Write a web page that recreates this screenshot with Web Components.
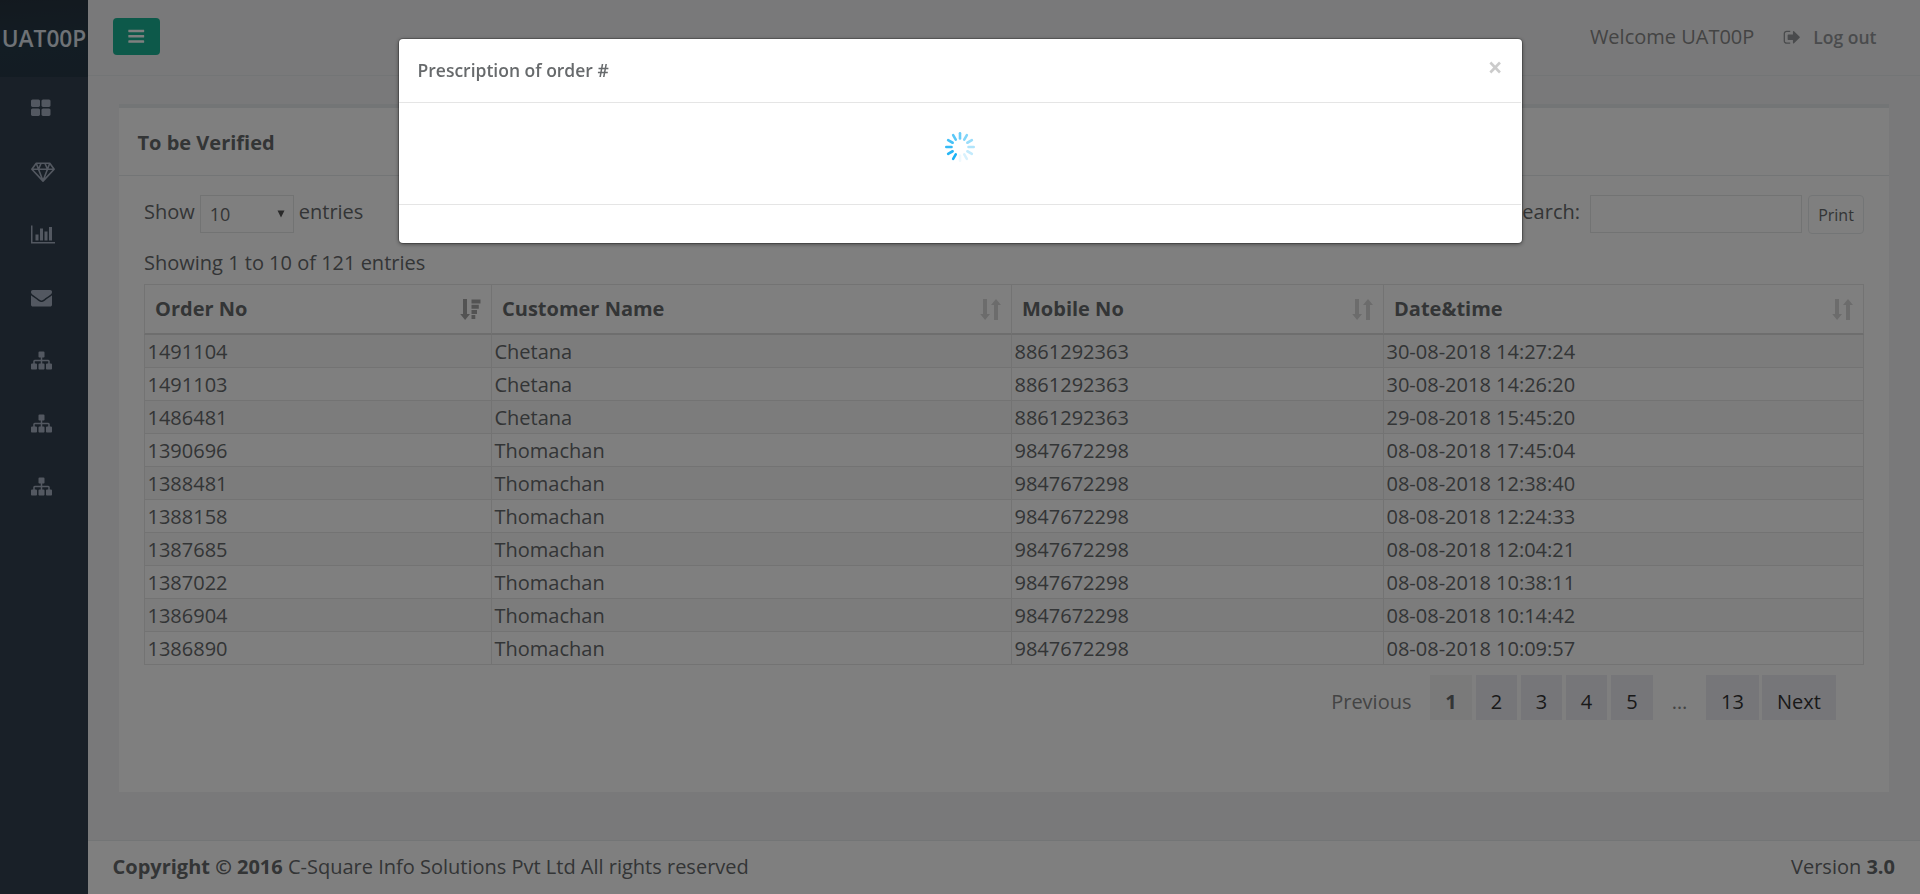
<!DOCTYPE html>
<html lang="en">
<head>
<meta charset="utf-8">
<title>To be Verified</title>
<style>
html,body{margin:0;height:100%;overflow:hidden}
body{font:20px/28px "Open Sans",sans-serif;color:#676a6c;background:#f3f3f4}
</style>
</head>
<body>
<app-shell>
  <side-nav slot="side" brand="UAT00P"></side-nav>
  <top-bar slot="top" user="UAT00P"></top-bar>
  <data-panel heading="To be Verified">
    <list-toolbar></list-toolbar>
    <orders-table></orders-table>
    <page-links></page-links>
  </data-panel>
  <page-footer slot="foot"></page-footer>
</app-shell>
<modal-dialog heading="Prescription of order #"><loading-spinner></loading-spinner></modal-dialog>

<script>
const ICONS = {
  bars:[1792,'<path d="M1664 1344v128q0 26-19 45t-45 19h-1408q-26 0-45-19t-19-45v-128q0-26 19-45t45-19h1408q26 0 45 19t19 45zm0-512v128q0 26-19 45t-45 19h-1408q-26 0-45-19t-19-45v-128q0-26 19-45t45-19h1408q26 0 45 19t19 45zm0-512v128q0 26-19 45t-45 19h-1408q-26 0-45-19t-19-45v-128q0-26 19-45t45-19h1408q26 0 45 19t19 45z"/>'],
  grid:[1792,'<path transform="translate(-64 0)" d="M832 1024v384q0 52-38 90t-90 38h-512q-52 0-90-38t-38-90v-384q0-52 38-90t90-38h512q52 0 90 38t38 90zm0-768v384q0 52-38 90t-90 38h-512q-52 0-90-38t-38-90v-384q0-52 38-90t90-38h512q52 0 90 38t38 90zm896 768v384q0 52-38 90t-90 38h-512q-52 0-90-38t-38-90v-384q0-52 38-90t90-38h512q52 0 90 38t38 90zm0-768v384q0 52-38 90t-90 38h-512q-52 0-90-38t-38-90v-384q0-52 38-90t90-38h512q52 0 90 38t38 90z"/>'],
  diamond:[2048,'<path fill="none" stroke="currentColor" stroke-width="135" stroke-linejoin="round" d="M448 192H1600L1975 704L1024 1720L73 704ZM73 704H1975M640 704L1024 1690L1408 704M448 192L640 704L860 192M1188 192L1408 704L1600 192"/>'],
  chart:[2048,'<path d="M640 896v512h-256v-512h256zm384-512v1024h-256v-1024h256zm1024 1152v128h-2048v-1536h128v1408h1920zm-640-896v768h-256v-768h256zm384-384v1152h-256v-1152h256z"/>'],
  mail:[1792,'<path d="M1792 710v794q0 66-47 113t-113 47h-1472q-66 0-113-47t-47-113v-794q44 49 101 87 362 246 497 345 57 42 92.5 65.5t94.5 48 110 24.5h2q51 0 110-24.5t94.5-48 92.5-65.5q170-123 498-345 57-39 100-87zm0-294q0 79-49 151t-122 123q-376 261-468 325-10 7-42.5 31t-54 38.5-52 32.5-57.5 27-50 9h-2q-23 0-50-9t-57.5-27-52-32.5-54-38.5-42.5-31q-91-64-262-182.5t-205-142.5q-62-42-117-115.5t-55-136.5q0-78 41.5-130t118.5-52h1472q65 0 112.5 47t47.5 113z"/>'],
  tree:[1792,'<path d="M1792 1248v320q0 40-28 68t-68 28h-320q-40 0-68-28t-28-68v-320q0-40 28-68t68-28h96v-192h-512v192h96q40 0 68 28t28 68v320q0 40-28 68t-68 28h-320q-40 0-68-28t-28-68v-320q0-40 28-68t68-28h96v-192h-512v192h96q40 0 68 28t28 68v320q0 40-28 68t-68 28h-320q-40 0-68-28t-28-68v-320q0-40 28-68t68-28h96v-192q0-52 38-90t90-38h512v-192h-96q-40 0-68-28t-28-68v-320q0-40 28-68t68-28h320q40 0 68 28t28 68v320q0 40-28 68t-68 28h-96v192h512q52 0 90 38t38 90v192h96q40 0 68 28t28 68z"/>'],
  out:[1792,'<path d="M704 1440q0 4 1 20t.5 26.5-3 23.5-10 19.5-20.5 6.5h-320q-119 0-203.5-84.5t-84.5-203.5v-704q0-119 84.5-203.5t203.5-84.5h320q13 0 22.5 9.5t9.5 22.5q0 4 1 20t.5 26.5-3 23.5-10 19.5-20.5 6.5h-320q-66 0-113 47t-47 113v704q0 66 47 113t113 47h312l11.5 1 11.5 3 8 5.5 7 9 2 13.5zm928-544q0 26-19 45l-544 544q-19 19-45 19t-45-19-19-45v-288h-448q-26 0-45-19t-19-45v-384q0-26 19-45t45-19h448v-288q0-26 19-45t45-19 45 19l544 544q19 19 19 45z"/>']
};
const define = (name, css, html) => customElements.define(name, class extends HTMLElement {
  constructor(){
    super();
    const t = document.createElement('template');
    t.innerHTML = '<style>' + css + '</style>' + (typeof html === 'function' ? html(this) : html);
    this.attachShadow({mode:'open'}).append(t.content.cloneNode(true));
  }
});

define('ui-icon', ':host{display:block}svg{display:block;fill:currentColor}', el => {
  const [w, body] = ICONS[el.getAttribute('name')], s = +el.getAttribute('size');
  return `<svg viewBox="0 0 ${w} 1792" width="${s * w / 1792}" height="${s}">${body}</svg>`;
});

define('app-shell', `
:host{display:grid;grid-template-columns:88px 1fr;height:894px}
.main{display:flex;flex-direction:column;min-width:0}
.content{flex:1;padding:28px 31px 0}`,
`<slot name="side"></slot><div class="main"><slot name="top"></slot><div class="content"><slot></slot></div><slot name="foot"></slot></div>`);

define('side-nav', `
:host{display:block;background:#334150;color:#a7b1c2}
.brand{box-sizing:border-box;height:77px;display:flex;align-items:center;justify-content:center;color:#dfe4ed;font-weight:600;font-size:22.7px;background:linear-gradient(175deg,#26333f,#263a48 60%,#263847);white-space:nowrap}
.item{height:63px;display:flex;align-items:center;padding:0 0 0 31px;box-sizing:border-box}`,
el => `<div class="brand">${el.getAttribute('brand')}</div>` +
  ['grid','diamond','chart','mail','tree','tree','tree'].map(n => `<div class="item"><ui-icon name="${n}" size="21"></ui-icon></div>`).join(''));

define('top-bar', `
:host{box-sizing:border-box;height:76px;border-bottom:1px solid #e7eaec;display:flex;align-items:center;padding:0 43.5px 3px 25px}
.menu{width:47px;height:37px;border-radius:4px;background:#1ab394;color:#fff;display:flex;align-items:center;justify-content:center}
.user{margin-left:auto;color:#888;padding-top:2px}
.out{display:flex;align-items:center;font-weight:600;font-size:17.5px;color:#94979a;margin-left:29px;gap:11.500px}
.out span{padding-top:2px}.out ui-icon{padding-top:2px}`,
el => `<div class="menu"><ui-icon name="bars" size="18.5"></ui-icon></div><span class="user">Welcome ${el.getAttribute('user')}</span><div class="out"><ui-icon name="out" size="18.5"></ui-icon><span>Log out</span></div>`);

define('data-panel', `
:host{display:block;box-sizing:border-box;height:688px;border-top:4px solid #e7eaec;background:#fff}
h5{margin:0;box-sizing:border-box;height:68px;border-bottom:1px solid #e7eaec;padding:20px 18.5px 0;font-size:20px;line-height:30px;font-weight:700}
.body{padding:19px 25px 0}`,
el => `<h5>${el.getAttribute('heading')}</h5><div class="body"><slot></slot></div>`);

define('list-toolbar', `
:host{display:block;height:89px}
.row{display:flex;height:39px}
.txt{line-height:34px}
.sel,.inp{box-sizing:border-box;height:38px;border:1px solid #e5e6e7}
.sel{width:94px;margin:0 5px 0 5px;display:flex;align-items:center;justify-content:space-between;padding:0 8px 0 9px;font-size:18px}
.inp{width:212px;margin-left:10px}
.search{margin-left:auto}
.print{box-sizing:border-box;width:56px;height:39px;margin-left:6px;border:1px solid #e7eaec;border-radius:4px;font-size:16px;line-height:38px;text-align:center}
.info{margin-top:15px;line-height:28px}`,
`<div class="row"><span class="txt">Show</span><div class="sel"><span>10</span><svg width="8" height="8"><path d="M0.5 .5h7L4 7.5z" fill="#555"/></svg></div><span class="txt">entries</span><span class="txt search">Search:</span><div class="inp"></div><div class="print">Print</div></div><div class="info">Showing 1 to 10 of 121 entries</div>`);

const arrows = `<svg class="s" width="21" height="21"><path d="M3 0h4v15h3L5.100 21 .2 15h2.800zM14 21h4V6h3L16 0 11 6h3z"/></svg>`;
const sorted = `<svg class="s on" width="21" height="21"><path d="M3 0h4v15h3L5.100 21 .2 15h2.800zM11.500 .5h9v4h-9zM11.500 5.700h7.300v4h-7.300zM11.500 10.900h5.500v4h-5.500zM11.500 16h3.800v4h-3.800z"/></svg>`;
const rows = [['1491104','Chetana','8861292363','30-08-2018 14:27:24'],['1491103','Chetana','8861292363','30-08-2018 14:26:20'],['1486481','Chetana','8861292363','29-08-2018 15:45:20'],['1390696','Thomachan','9847672298','08-08-2018 17:45:04'],['1388481','Thomachan','9847672298','08-08-2018 12:38:40'],['1388158','Thomachan','9847672298','08-08-2018 12:24:33'],['1387685','Thomachan','9847672298','08-08-2018 12:04:21'],['1387022','Thomachan','9847672298','08-08-2018 10:38:11'],['1386904','Thomachan','9847672298','08-08-2018 10:14:42'],['1386890','Thomachan','9847672298','08-08-2018 10:09:57']];
define('orders-table', `
:host{display:block}
.t{display:grid;grid-template-columns:347px 520px 372px 481px;border-top:1px solid #e7e7e7}
.t>*{box-sizing:border-box;border-left:1px solid #e7e7e7;border-bottom:1px solid #e7e7e7}
.t>:nth-child(4n){border-right:1px solid #e7e7e7}
.h{height:50px;border-bottom:2px solid #ddd;font-weight:700;padding:0 10px;display:flex;align-items:center;justify-content:space-between}
.s{fill:#000;opacity:.15}.on{opacity:.34}
.c{height:33px;line-height:33px;padding-left:2.5px}
.odd{background:#f9f9f9}`,
`<div class="t">${['Order No','Customer Name','Mobile No','Date&amp;time'].map((h,i)=>`<div class="h"><span>${h}</span>${i?arrows:sorted}</div>`).join('')}${rows.map((r,i)=>r.map(c=>`<div class="c ${i%2?'':'odd'}">${c}</div>`).join('')).join('')}</div>`);

define('page-links', `
:host{display:flex;justify-content:flex-end;padding:10px 28px 0 0;line-height:54px}
span{height:45px;text-align:center;background:#ececf2;color:#333;margin-left:4px;width:41px}
.plain{background:none;color:#888}
.prev{width:auto;margin-right:14.500px}
.cur{background:#f4f4f4;color:#676a6c;font-weight:700;width:42px}`,
`<span class="plain prev">Previous</span><span class="cur">1</span><span>2</span><span>3</span><span>4</span><span style="width:42px">5</span><span class="plain" style="width:45px">…</span><span style="width:53px">13</span><span style="width:74px;margin-left:3px">Next</span>`);

define('page-footer', `
:host{box-sizing:border-box;height:54px;border-top:1px solid #e7eaec;background:#fff;display:flex;justify-content:space-between;padding:12px 25px 0 24.500px}`,
`<div><b>Copyright © 2016</b> C-Square Info Solutions Pvt Ltd All rights reserved</div><div>Version <b>3.0</b></div>`);

define('loading-spinner', ':host{display:block;width:32px;height:32px}svg{display:block}',
`<svg width="32" height="32" viewBox="-16 -16 32 32" stroke="#1ab2f5" stroke-width="2.600" stroke-linecap="round">${
  Array.from({length:12},(_,i)=>`<path d="M0 -8.500V-13.700" transform="rotate(${210+i*30})" opacity="${[1,.94,.88,.8,.72,.64,.54,.44,.34,.26,.17,.07][i]}"/>`).join('')}</svg>`);

define('modal-dialog', `
:host{position:fixed;inset:0;background:rgba(0,0,0,.5);display:flex;justify-content:center;align-items:flex-start;padding-top:39px}
.box{width:1123px;height:204px;background:#fff;border-radius:4px;box-shadow:0 0 0 1px rgba(0,0,0,.2),0 1px 4px rgba(0,0,0,.5);display:flex;flex-direction:column;margin-left:1px}
header{box-sizing:border-box;height:64px;border-bottom:1px solid #e5e5e5;display:flex;justify-content:space-between;padding:16px 18.500px 0 18.500px;margin-right:1px;line-height:30px}
h4{margin:0;font-size:17.5px;font-weight:600;color:#676a6c}
.x{font-size:26px;font-weight:700;color:#000;opacity:.2;line-height:25px}
.body{height:101px;display:flex;justify-content:center;padding:28px 2px 0 0;box-sizing:border-box}
footer{flex:1;border-top:1px solid #e5e5e5;margin-right:1px}`,
el => `<div class="box"><header><h4>${el.getAttribute('heading')}</h4><span class="x">×</span></header><div class="body"><slot></slot></div><footer></footer></div>`);
</script>
</body>
</html>
